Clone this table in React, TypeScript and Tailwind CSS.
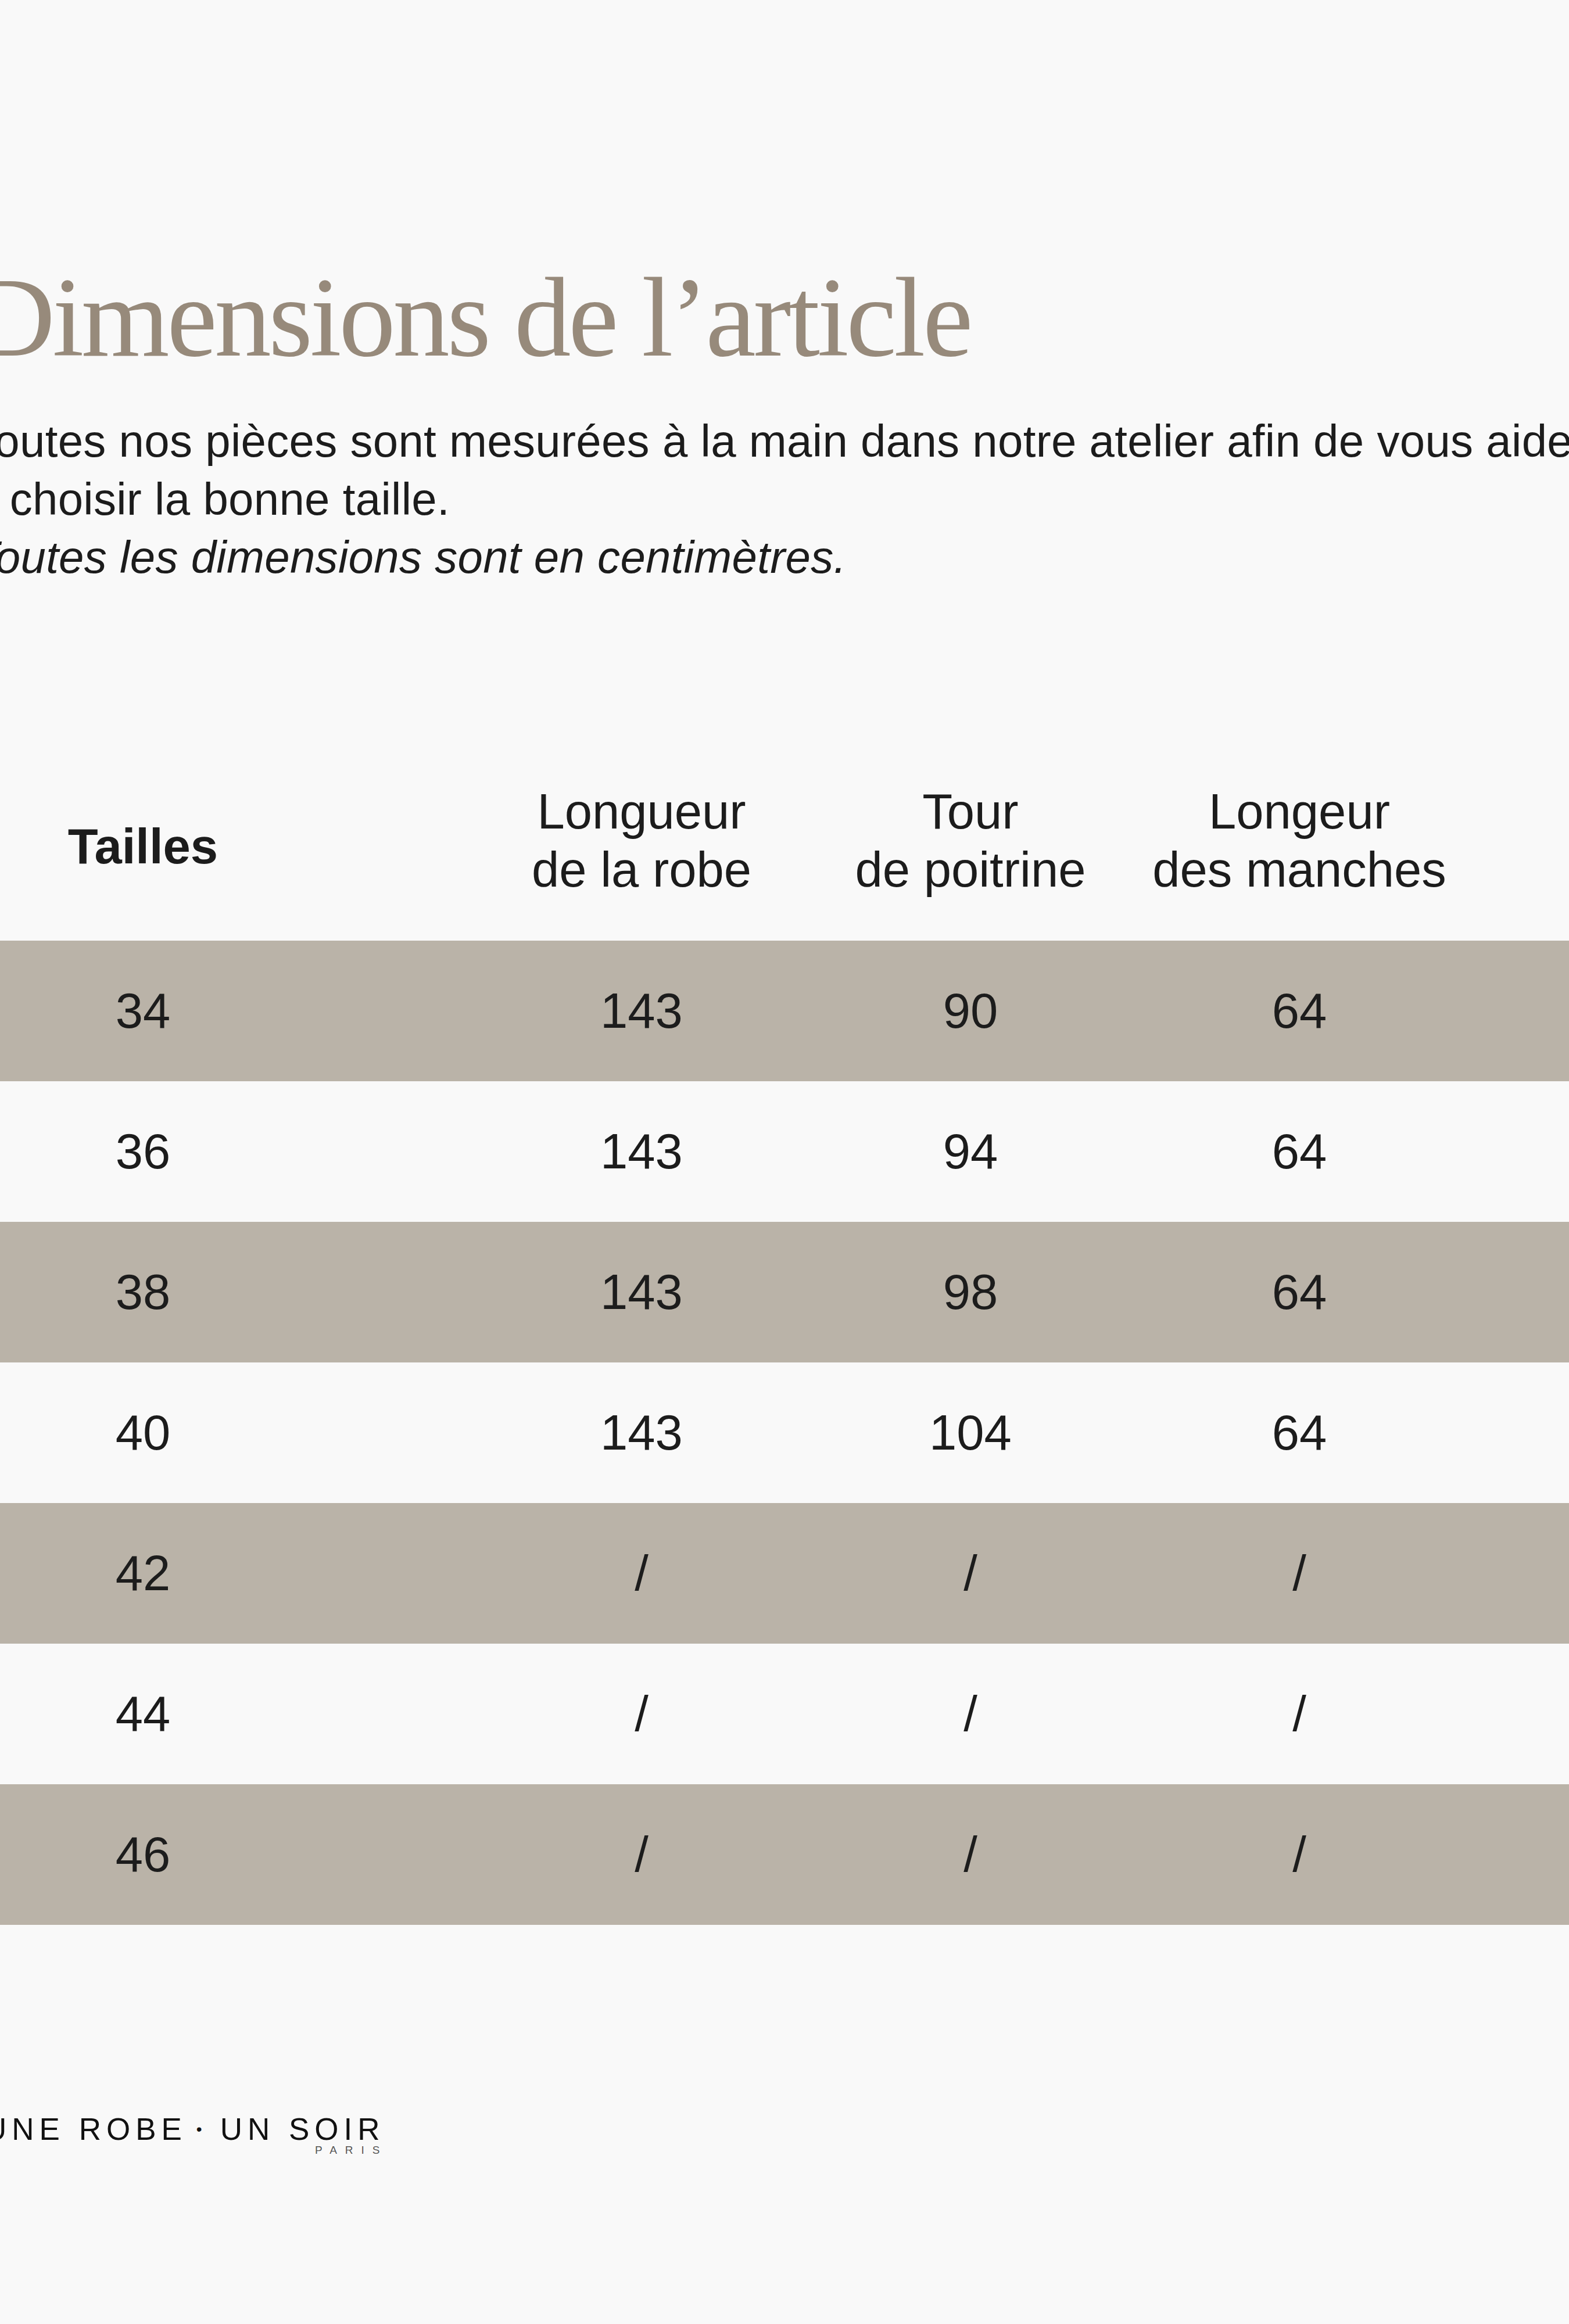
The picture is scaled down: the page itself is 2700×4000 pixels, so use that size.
export default function App() {
  const rows: string[][] = [
    ["34", "143", "90", "64"],
    ["36", "143", "94", "64"],
    ["38", "143", "98", "64"],
    ["40", "143", "104", "64"],
    ["42", "/", "/", "/"],
    ["44", "/", "/", "/"],
    ["46", "/", "/", "/"],
  ];
  return (
    <div className="w-full min-h-[4000px] overflow-hidden bg-[#f9f9f9] text-[#1c1c1c] font-['Liberation_Sans',Arial,sans-serif]">
      <h1 className="ml-[-46px] pt-[449px] font-['Liberation_Serif','Times_New_Roman',serif] text-[195px] leading-[195px] tracking-[-4.5px] font-normal text-[#978a7b] whitespace-nowrap">
        Dimensions de l’article
      </h1>

      <div className="mt-[65px] ml-[-49px] text-[78px] leading-[100px] tracking-[0.3px] whitespace-nowrap">
        <p>
          Toutes nos pièces sont mesurées à la main dans notre atelier afin de vous aider
          <br />à choisir la bonne taille.
        </p>
        <p className="italic">Toutes les dimensions sont en centimètres.</p>
      </div>

      <div className="mt-[338px] flex h-[200px] items-center text-center text-[85px] leading-[100px]">
        <div className="w-[492px] mt-[20px] font-bold">Tailles</div>
        <div className="ml-[329px] w-[566px]">
          Longueur
          <br />
          de la robe
        </div>
        <div className="w-[566px]">
          Tour
          <br />
          de poitrine
        </div>
        <div className="w-[566px]">
          Longeur
          <br />
          des manches
        </div>
      </div>

      <div className="mt-[72px]">
        {rows.map((r, i) => (
          <div
            key={r[0]}
            className={
              "flex h-[242px] w-full items-center text-center text-[85px] leading-[100px] " +
              (i % 2 === 0 ? "bg-[#bab3a8]" : "bg-[#f9f9f9]")
            }
          >
            <div className="w-[492px]">{r[0]}</div>
            <div className="ml-[329px] w-[566px]">{r[1]}</div>
            <div className="w-[566px]">{r[2]}</div>
            <div className="w-[566px]">{r[3]}</div>
          </div>
        ))}
      </div>

      <div className="mt-[327px] ml-[-27px] inline-flex flex-col items-end">
        <div className="mr-[-9px] flex items-center text-[53px] leading-[50px] tracking-[9px] text-[#111111] whitespace-nowrap">
          <span>UNE ROBE</span>
          <span className="ml-[16px] mr-[22px] text-[28px]">•</span>
          <span>UN SOIR</span>
        </div>
        <div className="mt-[2px] mr-[-14px] text-[19px] leading-[18px] tracking-[14px] text-[#555555]">
          PARIS
        </div>
      </div>
    </div>
  );
}
